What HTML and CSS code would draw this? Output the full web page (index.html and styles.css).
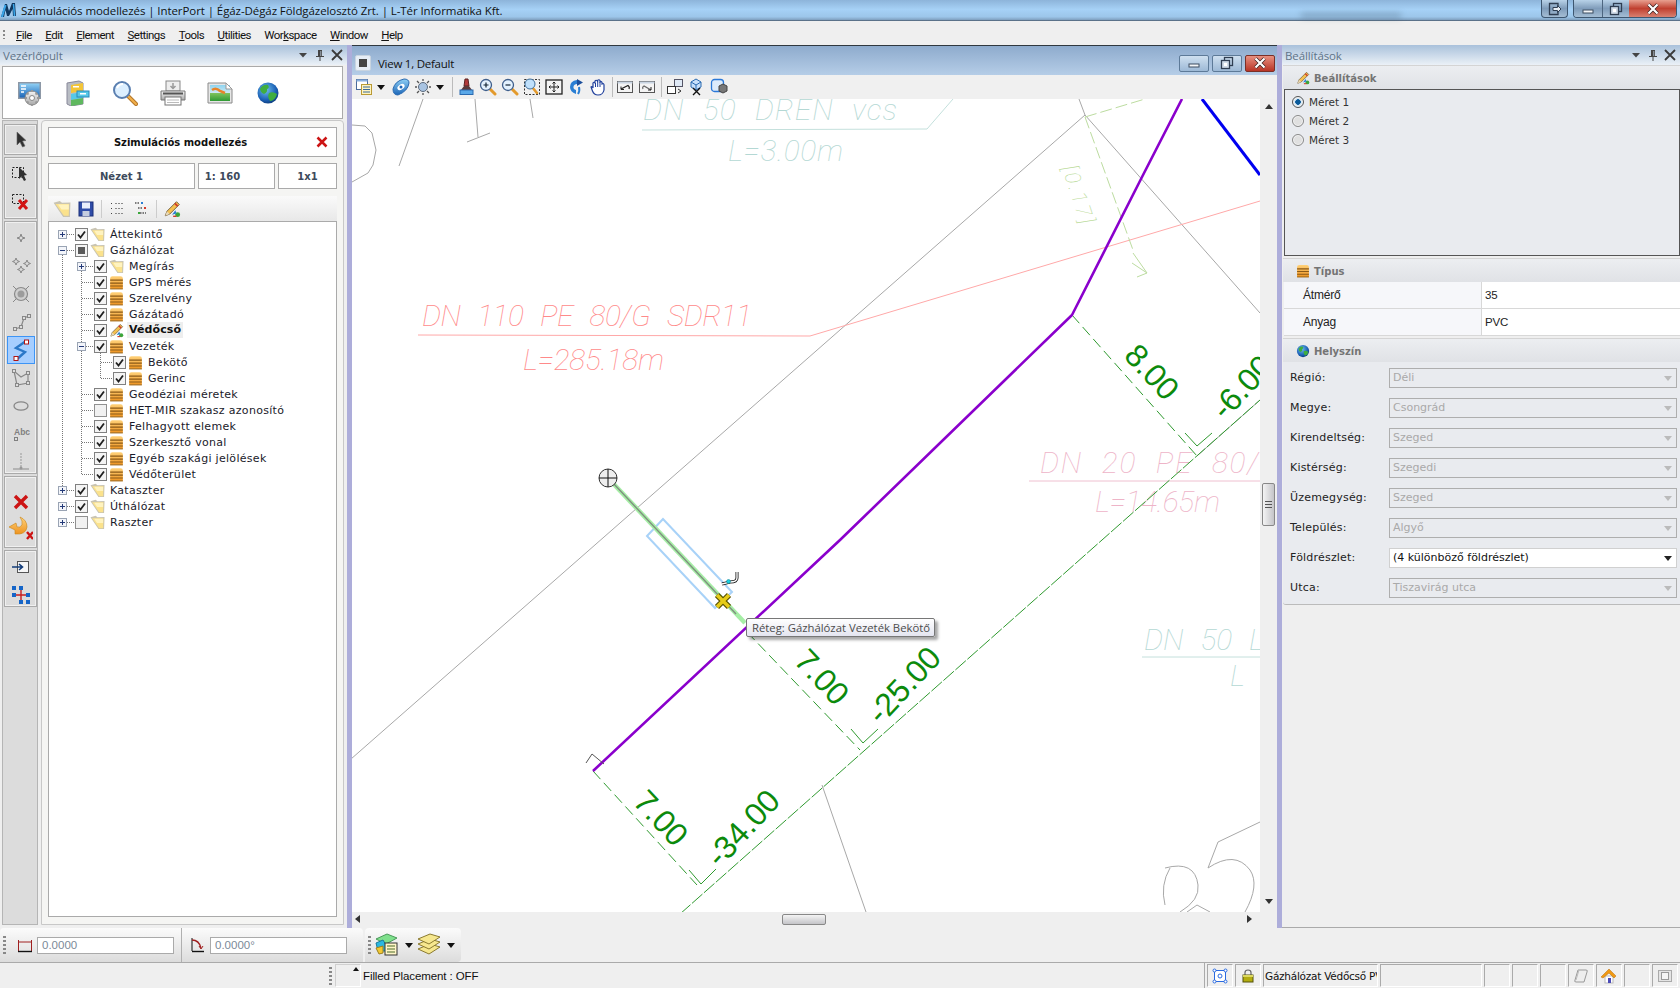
FILE: index.html
```html
<!DOCTYPE html>
<html lang="hu">
<head>
<meta charset="utf-8">
<title>Szimulációs modellezés</title>
<link rel="stylesheet" href="styles.css">
</head>
<body>
<svg class="defs" aria-hidden="true">
  <defs>
    <linearGradient id="gBlue" x1="0" y1="0" x2="0" y2="1"><stop offset="0" stop-color="#8fd0f5"/><stop offset="1" stop-color="#1c66b8"/></linearGradient>
    <linearGradient id="gOrange" x1="0" y1="0" x2="0" y2="1"><stop offset="0" stop-color="#ffd27a"/><stop offset="1" stop-color="#ee9320"/></linearGradient>
    <linearGradient id="gGrey" x1="0" y1="0" x2="0" y2="1"><stop offset="0" stop-color="#f6f6f6"/><stop offset="1" stop-color="#a8a8a8"/></linearGradient>
    <radialGradient id="gGlobe" cx=".4" cy=".35" r=".7"><stop offset="0" stop-color="#6fc0ef"/><stop offset=".7" stop-color="#1a5fb4"/><stop offset="1" stop-color="#0d3a78"/></radialGradient>
    <linearGradient id="gLand" x1="0" y1="0" x2="0" y2="1"><stop offset="0" stop-color="#8ed4f0"/><stop offset=".5" stop-color="#cfe9f4"/><stop offset=".51" stop-color="#7dc35c"/><stop offset="1" stop-color="#2f9a35"/></linearGradient>

    <symbol id="i-logo" viewBox="0 0 16 16"><path d="M0 15 L4 2 L6 2 L8 9 L11 1 L14 1 L15 14 L12 14 L11.500 7 L8 14 L6 14 L4.500 8 L3 15Z" fill="#10385f"/><path d="M1 15 L4.500 3" stroke="#3aa6ea" stroke-width="2" fill="none"/><path d="M12.500 2 L13.500 14" stroke="#3aa6ea" stroke-width="1.500" fill="none"/></symbol>

    <symbol id="i-folder" viewBox="0 0 16 16"><path d="M.5 2.500 L6 .8 L8 2.500 L15.500 2.200 L15 15 L9 15Z" fill="#c9c4b2"/><path d="M2.200 3.500 L14.300 3.500 L14 14 L9.700 14Z" fill="#fbe28c"/><path d="M4.500 4 L14 4 L14 8.500 L7.500 8.500Z" fill="#fff3bf"/></symbol>
    <symbol id="i-layer" viewBox="0 0 13 13"><path d="M1 3 Q1 1 3 1 H10 Q12 1 12 3 V12 H1Z" fill="url(#gOrange)"/><path d="M1 4.500 H12 M1 7 H12 M1 9.500 H12" stroke="#8a5a18" stroke-width="1"/><path d="M1 12 H12" stroke="#a36a18" stroke-width="1"/></symbol>
    <symbol id="i-pencil" viewBox="0 0 16 16"><path d="M12 1.500 L14.500 4 L6 12.500 L2 14 L3.500 10Z" fill="#f5c04e" stroke="#6c5a3a" stroke-width=".8"/><path d="M2 14 L3.500 10 L6 12.500Z" fill="#e9d9b8"/><path d="M10.500 3 L13 5.500" stroke="#d23a2a" stroke-width="1.600"/><circle cx="13" cy="13" r="2.200" fill="#3aa63a"/><path d="M8 13 L11 9 L12 12Z" fill="#2a7fd4"/><path d="M9 14.500 H12" stroke="#d23a2a" stroke-width="1.200"/></symbol>
    <symbol id="i-globe" viewBox="0 0 16 16"><circle cx="8" cy="8" r="7" fill="url(#gGlobe)"/><path d="M3 5 Q5 2 8 3 Q9 5 7 6 Q8 8 5 9 Q3 8 3 5Z M9 8 Q12 7 14 9 Q13 13 10 13 Q8 11 9 8Z" fill="#3fae3f"/></symbol>

    <symbol id="cb-on" viewBox="0 0 13 13"><rect x=".5" y=".5" width="12" height="12" fill="#f4f4f4" stroke="#808080"/><path d="M3 6.500 L5.500 9.500 L10 3.500" fill="none" stroke="#202020" stroke-width="1.800"/></symbol>
    <symbol id="cb-off" viewBox="0 0 13 13"><rect x=".5" y=".5" width="12" height="12" fill="#f1f1f1" stroke="#909090"/></symbol>
    <symbol id="cb-mix" viewBox="0 0 13 13"><rect x=".5" y=".5" width="12" height="12" fill="#f4f4f4" stroke="#808080"/><rect x="3" y="3" width="7" height="7" fill="#5a5a5a"/></symbol>
    <symbol id="ex-plus" viewBox="0 0 9 9"><rect x=".5" y=".5" width="8" height="8" fill="#f3f5fa" stroke="#9aa4b4"/><path d="M2 4.500 H7 M4.500 2 V7" stroke="#243a78"/></symbol>
    <symbol id="ex-minus" viewBox="0 0 9 9"><rect x=".5" y=".5" width="8" height="8" fill="#f3f5fa" stroke="#9aa4b4"/><path d="M2 4.500 H7" stroke="#243a78"/></symbol>

    <symbol id="t-arrow" viewBox="0 0 24 24"><path d="M8 4 L8 17 L11 14 L13.500 19 L16 18 L13.500 13 L17 12.500Z" fill="#303030" stroke="#666" stroke-width=".6"/></symbol>
    <symbol id="t-sel" viewBox="0 0 24 24"><rect x="3.500" y="6.500" width="11" height="10" fill="none" stroke="#222" stroke-dasharray="2 1.500"/><path d="M10 6 L10 18 L12.500 15.500 L15 20 L17 19 L15 14.500 L18 14Z" fill="#303030"/></symbol>
    <symbol id="t-selx" viewBox="0 0 24 24"><rect x="3.500" y="4.500" width="11" height="9" fill="none" stroke="#222" stroke-dasharray="2 1.500"/><path d="M10 10 L18 19 M18 10 L10 19" stroke="#d21414" stroke-width="3"/></symbol>
    <symbol id="t-pt" viewBox="0 0 24 24"><path d="M12 8 L13 11 L16 12 L13 13 L12 16 L11 13 L8 12 L11 11Z" fill="none" stroke="#888"/></symbol>
    <symbol id="t-pts" viewBox="0 0 24 24"><g fill="none" stroke="#888"><path d="M7 4 L8 6.500 L10.500 7.500 L8 8.500 L7 11 L6 8.500 L3.500 7.500 L6 6.500Z"/><path d="M18 6 L19 8.500 L21.500 9.500 L19 10.500 L18 13 L17 10.500 L14.500 9.500 L17 8.500Z"/><path d="M12 12 L13 14.500 L15.500 15.500 L13 16.500 L12 19 L11 16.500 L8.500 15.500 L11 14.500Z"/></g></symbol>
    <symbol id="t-circ" viewBox="0 0 24 24"><circle cx="12" cy="12" r="6.500" fill="#cfcfcf" stroke="#8a8a8a" stroke-width="1.200"/><circle cx="12" cy="12" r="3.500" fill="#9c9c9c"/><path d="M4 4 L7 7 M20 4 L17 7 M4 20 L7 17 M20 20 L17 17" stroke="#888"/></symbol>
    <symbol id="t-line" viewBox="0 0 24 24"><path d="M6 19 L12 17 L15 8 L20 6" fill="none" stroke="#888" stroke-width="1.200"/><g fill="#ddd" stroke="#888"><rect x="4.500" y="17.500" width="3" height="3"/><rect x="10.500" y="15.500" width="3" height="3"/><rect x="13.500" y="6.500" width="3" height="3"/><rect x="18.500" y="4.500" width="3" height="3"/></g></symbol>
    <symbol id="t-pipe" viewBox="0 0 24 24"><path d="M17 3 L7 10 L16 14 L7 22" fill="none" stroke="#2b78c8" stroke-width="2.400"/><rect x="15.500" y="2" width="4" height="4" fill="#fff" stroke="#b01414"/><rect x="5" y="18.500" width="4" height="4" fill="#fff" stroke="#b01414"/></symbol>
    <symbol id="t-poly" viewBox="0 0 24 24"><path d="M5 5 L8 19 L19 17 L19 7 L12 11Z" fill="none" stroke="#888" stroke-width="1.200"/><g fill="#ddd" stroke="#888"><rect x="3.500" y="3.500" width="3" height="3"/><rect x="6.500" y="17.500" width="3" height="3"/><rect x="17.500" y="15.500" width="3" height="3"/><rect x="17.500" y="5.500" width="3" height="3"/></g></symbol>
    <symbol id="t-ell" viewBox="0 0 24 24"><ellipse cx="12" cy="12" rx="7" ry="4.200" fill="none" stroke="#888" stroke-width="1.300"/></symbol>
    <symbol id="t-perp" viewBox="0 0 24 24"><path d="M12 3 V18" stroke="#999" stroke-dasharray="2 1"/><path d="M4 19 H20" stroke="#999" stroke-width="1.200"/><circle cx="12" cy="18" r="1.500" fill="#999"/></symbol>
    <symbol id="t-x" viewBox="0 0 24 24"><path d="M6 6 L18 18 M18 6 L6 18" stroke="#cc1414" stroke-width="3.400"/></symbol>
    <symbol id="t-undo" viewBox="0 0 24 24"><path d="M0 11 L6 14 L6 18 Q17 19 18 11 Q18 4 11 1 Q14 5 13 9 Q11 12 8 11 L7 7Z" fill="url(#gOrange)" stroke="#c98414" stroke-width=".6"/><path d="M18 16 L24 23 M24 16 L18 23" stroke="#cc1414" stroke-width="2.400"/></symbol>
    <symbol id="t-enter" viewBox="0 0 24 24"><rect x="8.500" y="6.500" width="11" height="11" fill="#f6f6f6" stroke="#555"/><path d="M3 12 H13 M10 9 L13.500 12 L10 15" fill="none" stroke="#123c7a" stroke-width="1.600"/></symbol>
    <symbol id="t-net" viewBox="0 0 24 24"><path d="M12 5 V20 M5 12 H20" stroke="#c81e1e" stroke-width="1.400"/><g fill="#1565c8"><rect x="3" y="3" width="4" height="4"/><rect x="10" y="3" width="4" height="4"/><rect x="3" y="10" width="4" height="4"/><rect x="17" y="10" width="4" height="4"/><rect x="10" y="17" width="4" height="4"/><rect x="17" y="17" width="4" height="4"/></g></symbol>

    <symbol id="d-monitor" viewBox="0 0 26 26"><rect x="1" y="2" width="23" height="17" fill="#8d98a6"/><rect x="2.500" y="3.500" width="20" height="14" fill="url(#gBlue)"/><path d="M4 6 H9 M4 9 H9 M4 12 H7" stroke="#fff" stroke-width="1.400"/><circle cx="15" cy="18" r="7" fill="url(#gGrey)" stroke="#888"/><circle cx="15" cy="18" r="2.500" fill="#fff" stroke="#888"/><path d="M15 10 V12 M15 24 V26 M8 18 H10 M20 18 H23 M10 13 L11.500 14.500 M20 13 L18.500 14.500 M10 23 L11.500 21.500 M20 23 L18.500 21.500" stroke="#999" stroke-width="1.800"/></symbol>
    <symbol id="d-cabinet" viewBox="0 0 26 26"><path d="M2 3 L14 1 L18 3 V24 L6 26 L2 24Z" fill="#b9bdc4" stroke="#889"/><path d="M6 5 L18 3 V11 L6 13Z" fill="#f4c537"/><path d="M6 14 L18 12 V18 L6 20Z" fill="#56c8e8"/><path d="M6 20 L18 18 V24 L6 26Z" fill="#5fb85f"/><rect x="12" y="11" width="12" height="6" fill="#56c8e8" stroke="#2b88b8"/><rect x="8" y="6" width="6" height="1.500" fill="#fff"/><rect x="15" y="13" width="6" height="1.500" fill="#fff"/></symbol>
    <symbol id="d-search" viewBox="0 0 26 26"><path d="M15 15 L24 24" stroke="#b4762a" stroke-width="4" stroke-linecap="round"/><path d="M15 15 L24 24" stroke="#f2b04a" stroke-width="2" stroke-linecap="round"/><circle cx="10" cy="10" r="8" fill="#dcefff" stroke="#5a7fb0" stroke-width="2"/><path d="M5 8 Q7 4 11 4" stroke="#fff" stroke-width="2" fill="none"/></symbol>
    <symbol id="d-print" viewBox="0 0 26 26"><rect x="6" y="1" width="14" height="10" fill="#eee" stroke="#888"/><path d="M13 3 V8 M10.500 6 L13 8.500 L15.500 6" stroke="#999" fill="none" stroke-width="1.500"/><path d="M1 11 H25 V20 H1Z" fill="url(#gGrey)" stroke="#777"/><rect x="5" y="17" width="16" height="8" fill="#fff" stroke="#777"/><path d="M7 20 H19 M7 22.500 H19" stroke="#bbb"/><rect x="3" y="12.500" width="20" height="2" fill="#555"/></symbol>
    <symbol id="d-image" viewBox="0 0 26 26"><path d="M1 3 H19 L25 9 V23 H1Z" fill="#e6e6e6" stroke="#8a8a8a"/><rect x="3" y="5" width="20" height="16" fill="url(#gLand)"/><path d="M19 3 V9 H25Z" fill="#fff" stroke="#999"/><path d="M5 10 Q9 7 13 11 L18 13" stroke="#e8842a" stroke-width="2.500" fill="none"/></symbol>
    <symbol id="d-globe" viewBox="0 0 26 26"><circle cx="13" cy="13" r="10.500" fill="url(#gGlobe)"/><path d="M5 9 Q8 4 13 5 Q15 8 12 9 Q13 12 9 14 Q6 13 5 9Z M14 13 Q18 11 22 14 Q20 21 15 21 Q12 17 14 13Z" fill="#3fae3f"/></symbol>

    <symbol id="m-open" viewBox="0 0 18 18"><use href="#i-folder" width="18" height="18"/></symbol>
    <symbol id="m-save" viewBox="0 0 18 18"><rect x="2" y="2" width="14" height="14" fill="#2f4ca8" stroke="#1b2f78"/><rect x="5" y="2.500" width="8" height="6" fill="#e9eefb"/><rect x="5.500" y="11" width="7" height="5" fill="#c5cde0"/></symbol>
    <symbol id="m-list" viewBox="0 0 18 18"><path d="M3 3.500 H5 M3 8.500 H5 M3 13.500 H5" stroke="#444" stroke-dasharray="1 1"/><path d="M7 3.500 H15 M7 8.500 H15 M7 13.500 H15" stroke="#8a8a8a" stroke-dasharray="2 1"/></symbol>
    <symbol id="m-tree" viewBox="0 0 18 18"><path d="M3 3 H8 M6 8 H11 M8 13 H14" stroke="#555" stroke-dasharray="1.500 1" stroke-width="1.300"/><rect x="9" y="2" width="2" height="2" fill="#2a7fd4"/><rect x="12" y="7" width="2" height="2" fill="#d23a2a"/><rect x="6" y="12" width="2" height="2" fill="#3aa63a"/></symbol>

    <symbol id="v-win" viewBox="0 0 18 18"><rect x="1.500" y="1.500" width="11" height="10" fill="#fff" stroke="#4a6a9a"/><rect x="1.500" y="1.500" width="11" height="2" fill="#8ab0de"/><rect x="6.500" y="6.500" width="10" height="10" fill="#fff4c0" stroke="#b99a35"/><path d="M8 9 H15 M8 11.500 H15 M8 14 H15" stroke="#3a6a9a"/></symbol>
    <symbol id="v-eye" viewBox="0 0 18 18"><path d="M1 11 Q3 3 12 1 Q17 1 17 5 Q16 13 6 17 Q1 17 1 11Z" fill="url(#gBlue)" stroke="#2a6ab0"/><ellipse cx="9" cy="9" rx="4" ry="2.500" fill="#fff" transform="rotate(-35 9 9)"/><circle cx="9" cy="9" r="1.500" fill="#1c66b8"/></symbol>
    <symbol id="v-sun" viewBox="0 0 18 18"><circle cx="9" cy="9" r="4.500" fill="#a9c4e2" stroke="#5c6a7c"/><path d="M9 1 V3 M9 15 V17 M1 9 H3 M15 9 H17 M3 3 L5 5 M15 3 L13 5 M3 15 L5 13 M15 15 L13 13" stroke="#555" stroke-width="1.300"/></symbol>
    <symbol id="v-brush" viewBox="0 0 18 18"><path d="M8 1 H11 L12 8 H7Z" fill="#b03a3a" stroke="#5a2222"/><path d="M7 8 H12 L15 12 H4Z" fill="#5a3a3a"/><rect x="3" y="12" width="13" height="4.500" fill="#5aa8e8" stroke="#2a6ab0"/></symbol>
    <symbol id="v-zin" viewBox="0 0 18 18"><path d="M10 10 L16 16" stroke="#e39a2c" stroke-width="3" stroke-linecap="round"/><circle cx="7" cy="7" r="5.500" fill="#e3f2ff" stroke="#3f5f8c" stroke-width="1.300"/><path d="M4.500 7 H9.500 M7 4.500 V9.500" stroke="#123" stroke-width="1.200"/></symbol>
    <symbol id="v-zout" viewBox="0 0 18 18"><path d="M10 10 L16 16" stroke="#e39a2c" stroke-width="3" stroke-linecap="round"/><circle cx="7" cy="7" r="5.500" fill="#e3f2ff" stroke="#3f5f8c" stroke-width="1.300"/><path d="M4.500 7 H9.500" stroke="#123" stroke-width="1.200"/></symbol>
    <symbol id="v-zwin" viewBox="0 0 18 18"><rect x="1.500" y="1.500" width="15" height="15" fill="none" stroke="#333" stroke-dasharray="2 1.500"/><path d="M9 9 L14 15" stroke="#e39a2c" stroke-width="2.600" stroke-linecap="round"/><circle cx="7" cy="6" r="5" fill="#bfe0fb" stroke="#3f6f9c"/></symbol>
    <symbol id="v-fit" viewBox="0 0 18 18"><rect x="1" y="2" width="16" height="14" fill="#f4f4f4" stroke="#222" stroke-width="1.300"/><path d="M9 4 V14 M4 9 H14" stroke="#222"/><path d="M7.500 5.500 L9 4 L10.500 5.500 M7.500 12.500 L9 14 L10.500 12.500 M5.500 7.500 L4 9 L5.500 10.500 M12.500 7.500 L14 9 L12.500 10.500" stroke="#222" fill="none"/></symbol>
    <symbol id="v-rot" viewBox="0 0 18 18"><path d="M10 2 Q3 3 3 9 Q3 14 9 16 L9 12 Q6 11 6.500 8.500 Q7 6 10 6Z" fill="#2a7fd4"/><path d="M10 1 L16 4.500 L10 8Z" fill="#1c4f9c"/><path d="M12 9 Q13 13 11 16" stroke="#2a7fd4" stroke-width="2" fill="none"/></symbol>
    <symbol id="v-hand" viewBox="0 0 18 18"><path d="M4 10 V5 Q5 3.500 6 5 V3 Q7 1.500 8.500 3 V2.500 Q10 1 11 2.500 V4 Q12.500 3 13 4.500 V6 Q15 5 15 7 V12 Q14 17 9 17 Q5 17 3.500 13 L2 9 Q3 8 4 10Z" fill="#fff" stroke="#1f3f9c" stroke-width="1.200"/><path d="M6.500 5 V9 M8.700 3 V9 M11 4 V9" stroke="#1f3f9c"/></symbol>
    <symbol id="v-undo" viewBox="0 0 18 18"><rect x="1.500" y="3.500" width="15" height="11" fill="#f4f4f4" stroke="#555"/><rect x="1.500" y="3.500" width="15" height="2" fill="#c8d4e2"/><path d="M5 11 L12 7.500 Q14 9 13 11" fill="none" stroke="#222" stroke-width="1.200"/><path d="M5 8.500 V11.500 H8" fill="none" stroke="#222"/></symbol>
    <symbol id="v-redo" viewBox="0 0 18 18"><rect x="1.500" y="3.500" width="15" height="11" fill="#f4f4f4" stroke="#555"/><rect x="1.500" y="3.500" width="15" height="2" fill="#c8d4e2"/><path d="M13 12 L6 8 Q4 9 5 11" fill="none" stroke="#666" stroke-width="1.200"/><path d="M13 9 V12 H10" fill="none" stroke="#222"/></symbol>
    <symbol id="v-copy" viewBox="0 0 18 18"><rect x="8.500" y="1.500" width="8" height="7" fill="#dfe9f5" stroke="#556"/><rect x="1.500" y="8.500" width="8" height="7" fill="#fff" stroke="#333"/><path d="M12 11 L15 13 L12 15" stroke="#333" fill="none"/></symbol>
    <symbol id="v-cube" viewBox="0 0 18 18"><path d="M3 4 L8 1 L13 4 V9 L8 12 L3 9Z" fill="#c8e0fb" stroke="#2a6ab0"/><path d="M3 4 L8 7 L13 4 M8 7 V12" stroke="#2a6ab0" fill="none"/><path d="M5 10 L12 17 M12 10 L5 17" stroke="#111" stroke-width="1.400"/></symbol>
    <symbol id="v-views" viewBox="0 0 18 18"><rect x="1.500" y="1.500" width="12" height="12" rx="3" fill="#dcebfb" stroke="#2a78d8" stroke-width="1.300"/><path d="M9 8 L13 6 L17 8 V13 L13 15 L9 13Z" fill="#777" stroke="#444"/></symbol>

    <symbol id="w-min" viewBox="0 0 14 14"><rect x="2" y="8" width="10" height="3" fill="#f4f6f8" stroke="#3d4c60"/></symbol>
    <symbol id="w-res" viewBox="0 0 14 14"><rect x="4.500" y="1.500" width="8" height="8" fill="none" stroke="#2f3e52" stroke-width="1.300"/><rect x="1.500" y="4.500" width="8" height="8" fill="#cfdbe8" stroke="#2f3e52" stroke-width="1.300"/><rect x="4" y="7" width="3" height="3" fill="#fff"/></symbol>
    <symbol id="w-x" viewBox="0 0 14 14"><path d="M2.500 2.500 L11.500 11.500 M11.500 2.500 L2.500 11.500" stroke="#3a2222" stroke-width="3.600"/><path d="M2.500 2.500 L11.500 11.500 M11.500 2.500 L2.500 11.500" stroke="#fff" stroke-width="2.200"/></symbol>
    <symbol id="w-exit" viewBox="0 0 14 14"><path d="M10 4 V1.500 H1.500 V12.500 H10 V10" fill="none" stroke="#2f3e52" stroke-width="1.300"/><path d="M5 5.500 H9.500 V3.500 L13 7 L9.500 10.500 V8.500 H5Z" fill="#e8eef4" stroke="#2f3e52"/></symbol>
    <symbol id="h-menu" viewBox="0 0 10 10"><path d="M1 3 H9 L5 7.500Z" fill="#444"/></symbol>
    <symbol id="h-pin" viewBox="0 0 10 12"><path d="M3 1 H7 V7 H9 V8 H5.500 V12 H4.500 V8 H1 V7 H3Z M5.500 2 V7 H6.200 V2Z" fill="#444" fill-rule="evenodd"/></symbol>
    <symbol id="h-x" viewBox="0 0 12 12"><path d="M1 1 L11 11 M11 1 L1 11" stroke="#3a3a3a" stroke-width="1.800"/></symbol>

    <symbol id="b-len" viewBox="0 0 16 16"><path d="M1.500 3 V14 M14.500 3 V14" stroke="#a02020"/><path d="M2 5 H14" stroke="#a02020"/><path d="M1 14.500 H15" stroke="#111" stroke-width="1.400"/></symbol>
    <symbol id="b-ang" viewBox="0 0 16 16"><path d="M3 1 V14" stroke="#111"/><path d="M3 14.500 H15" stroke="#111" stroke-width="1.400"/><path d="M3 3 Q10 3 12 11" fill="none" stroke="#a02020" stroke-width="1.300"/><path d="M10 9 L12 12 L14 9" fill="none" stroke="#a02020"/></symbol>
    <symbol id="b-levels" viewBox="0 0 24 24"><path d="M1 6 L12 1 L22 5 L11 11Z" fill="#7fe08c" stroke="#4a9a5a"/><path d="M1 10 L8 7 L11 12 V18 L3 18Z" fill="#2bb8e0" stroke="#1a7a9c"/><path d="M1 15 L8 13 V20 L4 21Z" fill="#f2c832" stroke="#9a8020"/><rect x="10" y="10" width="12" height="12" fill="#fff6c8" stroke="#333"/><path d="M12 13 H20 M12 16 H20 M12 19 H20" stroke="#4a6a2a"/></symbol>
    <symbol id="b-stack" viewBox="0 0 24 24"><g stroke="#8a7a30" fill="#f6e78e"><path d="M1 16 L13 11 L23 14 L12 21Z"/><path d="M1 11 L13 6 L23 9 L12 16Z"/><path d="M1 6 L13 1 L23 4 L12 11Z"/></g></symbol>

    <symbol id="s-fit" viewBox="0 0 16 16"><rect x="2.500" y="2.500" width="11" height="11" fill="#fff" stroke="#2a6ae0"/><circle cx="8" cy="8" r="2" fill="none" stroke="#2a6ae0"/><g fill="#fff" stroke="#2a6ae0"><circle cx="2.500" cy="2.500" r="1.500"/><circle cx="13.500" cy="2.500" r="1.500"/><circle cx="2.500" cy="13.500" r="1.500"/><circle cx="13.500" cy="13.500" r="1.500"/></g></symbol>
    <symbol id="s-lock" viewBox="0 0 16 16"><path d="M5 7 V4.500 Q5 2 8 2 Q11 2 11 4.500 V7" fill="none" stroke="#666" stroke-width="1.200"/><rect x="3" y="7" width="10" height="7" fill="#b3ad10" stroke="#55520a"/><rect x="3" y="7" width="10" height="2" fill="#dcd860"/></symbol>
    <symbol id="s-scroll" viewBox="0 0 16 16"><path d="M5 2 H13 Q15 2 14 4 L11 14 H3 Q1 14 2 12Z" fill="#eee" stroke="#999"/><path d="M6 2 L3 12" stroke="#bbb"/></symbol>
    <symbol id="s-home" viewBox="0 0 16 16"><rect x="4" y="8" width="8" height="7" fill="#fff" stroke="#bbb"/><rect x="7" y="10" width="3" height="5" fill="#4a4ab8"/><path d="M0 9 L8 1 L15 8 L13 10 L8 5 L2 10Z" fill="#f09a14" stroke="#b96a0a" stroke-width=".5"/></symbol>
    <symbol id="s-view" viewBox="0 0 16 16"><rect x="1.500" y="2.500" width="13" height="11" fill="#e4e4e4" stroke="#aaa"/><rect x="4.500" y="4.500" width="7" height="7" fill="#f4f4f4" stroke="#999"/></symbol>
  </defs>
</svg>

<header class="titlebar">
  <svg class="tb-logo"><use href="#i-logo"/></svg>
  <span class="tb-title">Szimulációs modellezés | InterPort | Égáz-Dégáz Földgázelosztó Zrt. | L-Tér Informatika Kft.</span>
  <span class="tb-smudge"></span>
  <div class="tb-buttons">
    <span class="wbtn exit"><svg class="w14"><use href="#w-exit"/></svg></span>
    <div class="wgroup">
      <span class="wbtn min"><svg class="w14"><use href="#w-min"/></svg></span>
      <span class="wbtn res"><svg class="w14"><use href="#w-res"/></svg></span>
      <span class="wbtn close"><svg class="w14"><use href="#w-x"/></svg></span>
    </div>
  </div>
</header>

<nav class="menubar">
  <span class="grip"></span>
  <span class="mi"><u>F</u>ile</span>
  <span class="mi"><u>E</u>dit</span>
  <span class="mi"><u>E</u>lement</span>
  <span class="mi"><u>S</u>ettings</span>
  <span class="mi"><u>T</u>ools</span>
  <span class="mi"><u>U</u>tilities</span>
  <span class="mi">Wor<u>k</u>space</span>
  <span class="mi"><u>W</u>indow</span>
  <span class="mi"><u>H</u>elp</span>
</nav>

<main class="workspace">
  <aside class="left">
    <div class="dock-head">
      <span class="dock-title">Vezérlőpult</span>
      <svg class="h-ic h-m"><use href="#h-menu"/></svg>
      <svg class="h-ic h-p"><use href="#h-pin"/></svg>
      <svg class="h-ic h-c"><use href="#h-x"/></svg>
    </div>
    <div class="dash">
      <svg class="d-ic"><use href="#d-monitor"/></svg>
      <svg class="d-ic"><use href="#d-cabinet"/></svg>
      <svg class="d-ic"><use href="#d-search"/></svg>
      <svg class="d-ic"><use href="#d-print"/></svg>
      <svg class="d-ic"><use href="#d-image"/></svg>
      <svg class="d-ic"><use href="#d-globe"/></svg>
    </div>
    <div class="left-body">
      <div class="tools">
        <div class="tg g1"><span class="tbtn b30"><svg class="t24"><use href="#t-arrow"/></svg></span></div>
        <div class="tg g2">
          <span class="tbtn b29"><svg class="t24"><use href="#t-sel"/></svg></span>
          <span class="tbtn b29"><svg class="t24"><use href="#t-selx"/></svg></span>
        </div>
        <div class="tg g3">
          <span class="tbtn b28"><svg class="t24"><use href="#t-pt"/></svg></span>
          <span class="tbtn b28"><svg class="t24"><use href="#t-pts"/></svg></span>
          <span class="tbtn b28"><svg class="t24"><use href="#t-circ"/></svg></span>
          <span class="tbtn b28"><svg class="t24"><use href="#t-line"/></svg></span>
          <span class="tbtn b28 sel"><svg class="t24"><use href="#t-pipe"/></svg></span>
          <span class="tbtn b28"><svg class="t24"><use href="#t-poly"/></svg></span>
          <span class="tbtn b28"><svg class="t24"><use href="#t-ell"/></svg></span>
          <span class="tbtn b28 abc"><span class="abc-box"></span>Abc</span>
          <span class="tbtn b28"><svg class="t24"><use href="#t-perp"/></svg></span>
        </div>
        <div class="tg g4">
          <span class="tbtn b26"><svg class="t24"><use href="#t-x"/></svg></span>
          <span class="tbtn b26"><svg class="t24"><use href="#t-undo"/></svg></span>
        </div>
        <div class="tg g5">
          <span class="tbtn b28"><svg class="t24"><use href="#t-enter"/></svg></span>
          <span class="tbtn b28"><svg class="t24"><use href="#t-net"/></svg></span>
        </div>
      </div>
      <div class="panel">
        <div class="box head-box"><span class="head-text">Szimulációs modellezés</span><svg class="head-x"><use href="#t-x"/></svg></div>
        <div class="chips">
          <div class="box chip c1">Nézet 1</div>
          <div class="box chip c2">1: 160</div>
          <div class="box chip c3">1x1</div>
        </div>
        <div class="mini">
          <svg class="m18"><use href="#m-open"/></svg>
          <svg class="m18"><use href="#m-save"/></svg>
          <span class="mini-sep"></span>
          <svg class="m18"><use href="#m-list"/></svg>
          <svg class="m18"><use href="#m-tree"/></svg>
          <span class="mini-sep"></span>
          <svg class="m18"><use href="#i-pencil"/></svg>
        </div>
        <div class="tree">
          <span class="guide ga"></span><span class="guide gb"></span><span class="guide gc"></span>
          <div class="row l0"><span class="slot"><svg class="ex"><use href="#ex-plus"/></svg></span><svg class="cb"><use href="#cb-on"/></svg><svg class="ti"><use href="#i-folder"/></svg><span class="tx">Áttekintő</span></div>
          <div class="row l0"><span class="slot"><svg class="ex"><use href="#ex-minus"/></svg></span><svg class="cb"><use href="#cb-mix"/></svg><svg class="ti"><use href="#i-folder"/></svg><span class="tx">Gázhálózat</span></div>
          <div class="row l1"><span class="slot"><svg class="ex"><use href="#ex-plus"/></svg></span><svg class="cb"><use href="#cb-on"/></svg><svg class="ti"><use href="#i-folder"/></svg><span class="tx">Megírás</span></div>
          <div class="row l1"><span class="slot leaf"></span><svg class="cb"><use href="#cb-on"/></svg><svg class="ti"><use href="#i-layer"/></svg><span class="tx">GPS mérés</span></div>
          <div class="row l1"><span class="slot leaf"></span><svg class="cb"><use href="#cb-on"/></svg><svg class="ti"><use href="#i-layer"/></svg><span class="tx">Szerelvény</span></div>
          <div class="row l1"><span class="slot leaf"></span><svg class="cb"><use href="#cb-on"/></svg><svg class="ti"><use href="#i-layer"/></svg><span class="tx">Gázátadó</span></div>
          <div class="row l1"><span class="slot leaf"></span><svg class="cb"><use href="#cb-on"/></svg><svg class="ti"><use href="#i-pencil"/></svg><span class="tx active">Védőcső</span></div>
          <div class="row l1"><span class="slot"><svg class="ex"><use href="#ex-minus"/></svg></span><svg class="cb"><use href="#cb-on"/></svg><svg class="ti"><use href="#i-layer"/></svg><span class="tx">Vezeték</span></div>
          <div class="row l2"><span class="slot leaf"></span><svg class="cb"><use href="#cb-on"/></svg><svg class="ti"><use href="#i-layer"/></svg><span class="tx">Bekötő</span></div>
          <div class="row l2"><span class="slot leaf"></span><svg class="cb"><use href="#cb-on"/></svg><svg class="ti"><use href="#i-layer"/></svg><span class="tx">Gerinc</span></div>
          <div class="row l1"><span class="slot leaf"></span><svg class="cb"><use href="#cb-on"/></svg><svg class="ti"><use href="#i-layer"/></svg><span class="tx">Geodéziai méretek</span></div>
          <div class="row l1"><span class="slot leaf"></span><svg class="cb"><use href="#cb-off"/></svg><svg class="ti"><use href="#i-layer"/></svg><span class="tx">HET-MIR szakasz azonosító</span></div>
          <div class="row l1"><span class="slot leaf"></span><svg class="cb"><use href="#cb-on"/></svg><svg class="ti"><use href="#i-layer"/></svg><span class="tx">Felhagyott elemek</span></div>
          <div class="row l1"><span class="slot leaf"></span><svg class="cb"><use href="#cb-on"/></svg><svg class="ti"><use href="#i-layer"/></svg><span class="tx">Szerkesztő vonal</span></div>
          <div class="row l1"><span class="slot leaf"></span><svg class="cb"><use href="#cb-on"/></svg><svg class="ti"><use href="#i-layer"/></svg><span class="tx">Egyéb szakági jelölések</span></div>
          <div class="row l1"><span class="slot leaf"></span><svg class="cb"><use href="#cb-on"/></svg><svg class="ti"><use href="#i-layer"/></svg><span class="tx">Védőterület</span></div>
          <div class="row l0"><span class="slot"><svg class="ex"><use href="#ex-plus"/></svg></span><svg class="cb"><use href="#cb-on"/></svg><svg class="ti"><use href="#i-folder"/></svg><span class="tx">Kataszter</span></div>
          <div class="row l0"><span class="slot"><svg class="ex"><use href="#ex-plus"/></svg></span><svg class="cb"><use href="#cb-on"/></svg><svg class="ti"><use href="#i-folder"/></svg><span class="tx">Úthálózat</span></div>
          <div class="row l0"><span class="slot"><svg class="ex"><use href="#ex-plus"/></svg></span><svg class="cb"><use href="#cb-off"/></svg><svg class="ti"><use href="#i-folder"/></svg><span class="tx">Raszter</span></div>
        </div>
      </div>
    </div>
  </aside>

  <div class="strip"></div>

  <section class="view">
    <div class="view-title">
      <span class="view-icon"><span></span></span>
      <span class="view-name">View 1, Default</span>
      <div class="view-btns">
        <span class="vb"><svg class="w14"><use href="#w-min"/></svg></span>
        <span class="vb"><svg class="w14"><use href="#w-res"/></svg></span>
        <span class="vb red"><svg class="w14"><use href="#w-x"/></svg></span>
      </div>
    </div>
    <div class="view-tools">
      <svg class="v18"><use href="#v-win"/></svg><span class="caret"></span>
      <svg class="v18"><use href="#v-eye"/></svg>
      <svg class="v18"><use href="#v-sun"/></svg><span class="caret"></span>
      <span class="vsep"></span>
      <svg class="v18"><use href="#v-brush"/></svg>
      <svg class="v18"><use href="#v-zin"/></svg>
      <svg class="v18"><use href="#v-zout"/></svg>
      <svg class="v18"><use href="#v-zwin"/></svg>
      <svg class="v18"><use href="#v-fit"/></svg>
      <svg class="v18"><use href="#v-rot"/></svg>
      <svg class="v18"><use href="#v-hand"/></svg>
      <span class="vsep"></span>
      <svg class="v18"><use href="#v-undo"/></svg>
      <svg class="v18"><use href="#v-redo"/></svg>
      <span class="vsep"></span>
      <svg class="v18"><use href="#v-copy"/></svg>
      <svg class="v18"><use href="#v-cube"/></svg>
      <svg class="v18"><use href="#v-views"/></svg>
    </div>
    <div class="view-mid">
      <div class="canvas">
        <svg class="drawing" viewBox="352 99 908 813">
          <g class="ln-grey">
            <path d="M1085 115 L351 759"/>
            <path d="M1079 99 L1085 115 L1260 313"/>
            <path d="M352 125 L365 126 L372 133 L376 150 L373 165 L368 173 L352 182"/>
            <path d="M423 99 L399 166"/>
            <path d="M475 99 L478 137 M467 142 L490 133"/>
            <path d="M530 99 L533 118"/>
            <path d="M822 785 L866 912"/>
            <path d="M1165 868 Q1195 860 1198 885 Q1200 900 1180 912 M1165 905 Q1160 885 1170 868"/>
            <path d="M1260 822 L1218 842 L1208 868 Q1235 850 1250 870 Q1260 885 1245 912"/>
            <path d="M1197 456 L1260 400"/>
            <path d="M1187 912 L1197 905 L1210 912"/>
          </g>
          <g class="ln-pink">
            <path d="M1260 201 L810 336 L418 335"/>
          </g>
          <path class="ln-teal" d="M642 130 L927 129 L953 99"/>
          <path class="ln-rose" d="M1029 481 H1260"/>
          <path class="ln-teal" d="M1142 657 H1260"/>
          <g class="ln-lime">
            <path class="dash-l" d="M1085 117 L1145 99"/>
            <path class="dash-l" d="M1085 117 L1133 250"/>
            <path d="M1133 253 L1147 273 L1132 263 M1137 277 L1147 273"/>
          </g>
          <text class="cad cad-red" x="422" y="326" textLength="330">DN 110 PE 80/G SDR11</text>
          <text class="cad cad-red" x="523" y="370" textLength="141">L=285.18m</text>
          <text class="cad cad-teal" x="643" y="120" textLength="254">DN 50 DRÉN vcs</text>
          <text class="cad cad-teal" x="728" y="161" textLength="115">L=3.00m</text>
          <text class="cad cad-rose" x="1040" y="473" textLength="240">DN 20 PE 80/G</text>
          <text class="cad cad-rose" x="1095" y="512" textLength="125">L=14.65m</text>
          <text class="cad cad-teal" x="1144" y="650" textLength="120">DN 50 L</text>
          <text class="cad cad-teal" x="1230" y="686" textLength="60">L=</text>
          <text class="cad cad-lime" transform="translate(1062 168) rotate(72)" textLength="60">[0.17]</text>

          <g class="ln-green">
            <path class="dash-m" d="M1072 315 L1197 456"/>
            <path class="dash-m" d="M747 632 L860 750"/>
            <path class="dash-m" d="M593 771 L697 885"/>
            <path class="dash-s" d="M680 914 L1102 540 L1260 400"/>
            <path d="M1185 433 L1197 446 L1212 433"/>
            <path d="M851 729 L863 743 L878 729"/>
            <path d="M689 870 L701 884 L716 869"/>
          </g>
          <path class="ln-blue" d="M1202 99 L1260 175"/>
          <path class="ln-purple" d="M1182 99 L1142 177 L1072 315 L840 540 L593 771"/>
          <path class="tick" d="M586 763 L592 754 L604 764"/>

          <text class="dim" transform="translate(1152 372) rotate(47)">8.00</text>
          <text class="dim" transform="translate(1242 387) rotate(-47)">-6.00</text>
          <text class="dim" transform="translate(822 677) rotate(47)">7.00</text>
          <text class="dim" transform="translate(904 685) rotate(-47)">-25.00</text>
          <text class="dim" transform="translate(661 818) rotate(47)">7.00</text>
          <text class="dim" transform="translate(743 828) rotate(-47)">-34.00</text>

          <path class="sel-rect" d="M663 519 L647 536 L715 608 L732 592Z"/>
          <path class="sel-glow" d="M608 478 L745 623"/>
          <path class="sel-core" d="M613 483 L736 614"/>
          <circle class="sel-circ" cx="608" cy="478" r="9"/>
          <path class="sel-cross" d="M599 478 H617 M608 469 V487"/>
          <path class="x-out" d="M717 595 L729 607 M729 595 L717 607"/>
          <path class="x-in" d="M717 595 L729 607 M729 595 L717 607"/>
          <path class="cur-out" d="M737 572 V578 Q737 582 730 582 L722 584"/>
          <path class="cur-in" d="M737 572 V578 Q737 582 730 582 L722 584"/>
          <circle class="cur-dot" cx="728.500" cy="581.500" r="2"/>
        </svg>
        <div class="tooltip">Réteg: Gázhálózat Vezeték Bekötő</div>
      </div>
      <div class="vscroll">
        <span class="arr up"></span>
        <span class="vthumb"><span></span></span>
        <span class="arr down"></span>
      </div>
    </div>
    <div class="hscroll">
      <span class="arr lf"></span>
      <span class="hthumb"></span>
      <span class="arr rt"></span>
    </div>
  </section>

  <div class="strip"></div>

  <aside class="right">
    <div class="dock-head">
      <span class="dock-title">Beállítások</span>
      <svg class="h-ic h-m"><use href="#h-menu"/></svg>
      <svg class="h-ic h-p"><use href="#h-pin"/></svg>
      <svg class="h-ic h-c"><use href="#h-x"/></svg>
    </div>
    <div class="gh"><svg class="gh-ic"><use href="#i-pencil"/></svg>Beállítások</div>
    <div class="listbox">
      <div class="radio-row"><span class="radio on"></span>Méret 1</div>
      <div class="radio-row"><span class="radio"></span>Méret 2</div>
      <div class="radio-row"><span class="radio"></span>Méret 3</div>
    </div>
    <div class="gh gap"><svg class="gh-ic"><use href="#i-layer"/></svg>Típus</div>
    <div class="prop"><span class="pk">Átmérő</span><span class="pv">35</span></div>
    <div class="prop"><span class="pk">Anyag</span><span class="pv">PVC</span></div>
    <div class="gh gap"><svg class="gh-ic"><use href="#i-globe"/></svg>Helyszín</div>
    <div class="form">
      <div class="frow"><label>Régió:</label><div class="combo off">Déli</div></div>
      <div class="frow"><label>Megye:</label><div class="combo off">Csongrád</div></div>
      <div class="frow"><label>Kirendeltség:</label><div class="combo off">Szeged</div></div>
      <div class="frow"><label>Kistérség:</label><div class="combo off">Szegedi</div></div>
      <div class="frow"><label>Üzemegység:</label><div class="combo off">Szeged</div></div>
      <div class="frow"><label>Település:</label><div class="combo off">Algyő</div></div>
      <div class="frow"><label>Földrészlet:</label><div class="combo">(4 különböző földrészlet)</div></div>
      <div class="frow"><label>Utca:</label><div class="combo off">Tiszavirág utca</div></div>
    </div>
  </aside>
</main>

<div class="bar">
  <div class="bg bg1"><span class="vgrip"></span><svg class="b16"><use href="#b-len"/></svg><span class="num">0.0000</span></div>
  <div class="bg bg2"><svg class="b16"><use href="#b-ang"/></svg><span class="num">0.0000°</span></div>
  <div class="bg bg3"><span class="vgrip"></span><svg class="b24"><use href="#b-levels"/></svg><span class="caret"></span><svg class="b24"><use href="#b-stack"/></svg><span class="caret"></span></div>
</div>

<footer class="status">
  <span class="st-left"></span>
  <span class="vgrip st-grip"></span>
  <span class="cell w26 prompt"></span>
  <span class="st-msg">Filled Placement : OFF</span>
  <div class="st-cells">
    <span class="cell w26"><svg class="s16"><use href="#s-fit"/></svg></span>
    <span class="cell w26"><svg class="s16"><use href="#s-lock"/></svg></span>
    <span class="cell w115">Gázhálózat Védőcső PVC</span>
    <span class="cell w102"></span>
    <span class="cell w26"></span>
    <span class="cell w26"></span>
    <span class="cell w26"></span>
    <span class="cell w26"><svg class="s16"><use href="#s-scroll"/></svg></span>
    <span class="cell w26"><svg class="s16"><use href="#s-home"/></svg></span>
    <span class="cell w26"></span>
    <span class="cell w26"><svg class="s16"><use href="#s-view"/></svg></span>
  </div>
</footer>
</body>
</html>
```

FILE: styles.css
```css
* { box-sizing: border-box; }
html, body { margin: 0; padding: 0; }
body {
  width: 1680px; height: 988px; overflow: hidden;
  display: flex; flex-direction: column;
  background: #efefef; color: #111;
  font-family: "Liberation Sans", Arial, sans-serif; font-size: 12px;
}
.defs { position: absolute; width: 0; height: 0; }

/* title bar */
.titlebar {
  height: 21px; flex: none; display: flex; align-items: flex-start;
  background: linear-gradient(180deg, #8db4da 0%, #a6d1f6 45%, #9cc6ea 80%, #7f9fbe 95%, #39495a 100%);
}
.tb-logo { width: 16px; height: 16px; margin: 2px 0 0 1px; flex: none; }
.tb-title { font-family: "Open Sans", sans-serif; font-size: 11.500px; line-height: 21px; margin-left: 4px; color: #111; white-space: nowrap; letter-spacing: -.08px; }
.tb-smudge { width: 100px; height: 5px; margin: 13px 140px 0 auto; background: rgba(50,70,90,.3); filter: blur(3px); }
.tb-buttons { display: flex; margin-right: 3px; gap: 5px; }
.wgroup { display: flex; border: 1px solid #3d5670; border-top: 0; border-radius: 0 0 4px 4px; overflow: hidden; height: 18px; }
.wbtn { display: flex; align-items: center; justify-content: center; height: 17px; background: linear-gradient(180deg,#b8d2e8,#7f9cba 50%,#a4bdd4); }
.exit { width: 27px; height: 18px; border: 1px solid #3d5670; border-top: 0; border-radius: 0 0 4px 4px; }
.min { width: 29px; border-right: 1px solid #4d6680; }
.res { width: 26px; }
.close { width: 47px; background: linear-gradient(180deg,#e8a090,#c04030 50%,#d88070); }
.w14 { width: 14px; height: 14px; }

/* menu */
.menubar { height: 24px; flex: none; display: flex; align-items: center; background: #efefef; padding: 3px 0 0 3px; }
.grip { width: 2px; height: 9px; margin-right: 11px; background: repeating-linear-gradient(180deg,#888 0 2px,transparent 2px 4px); }
.mi { margin-right: 13.500px; font-family: "Roboto", sans-serif; font-size: 11.500px; color: #111; letter-spacing: -.55px; }

/* main */
.workspace { height: 883px; flex: none; display: flex; }
.strip { width: 5px; background: #adadda; flex: none; }
.left { width: 347px; flex: none; display: flex; flex-direction: column; background: #efefef; }
.right { width: 398px; flex: none; display: flex; flex-direction: column; background: #efefef; border-bottom: 1px solid #aaa; }
.dock-head { height: 20px; flex: none; display: flex; align-items: center; background: linear-gradient(180deg,#a9c1db,#ebf1f7); padding-left: 3px; }
.dock-title { font-family: "Open Sans", sans-serif; font-size: 11.500px; letter-spacing: -.1px; color: #5f7488; flex: 1; }
.h-ic { flex: none; }
.h-m { width: 10px; height: 10px; margin-right: 7px; }
.h-p { width: 10px; height: 12px; margin-right: 6px; }
.h-c { width: 12px; height: 12px; margin-right: 4px; }

.dash { height: 53px; flex: none; margin: 1px 4px 1px 2px; background: #fff; border: 1px solid #aaa; display: flex; align-items: center; padding-left: 14px; gap: 21.500px; }
.d-ic { width: 26px; height: 26px; flex: none; }

.left-body { flex: 1; display: flex; gap: 3px; padding: 0 3px 3px 2px; min-height: 0; }
.tools { width: 36px; flex: none; background: #dcdcdc; border: 1px solid #b5b5b5; padding: 3px 0 0 1px; display: flex; flex-direction: column; gap: 2px; }
.tg { width: 33px; border: 1px solid #aaa; outline: 1px solid #f0f0f0; outline-offset: -2px; display: flex; flex-direction: column; align-items: center; background: #dcdcdc; flex: none; }
.g1 { height: 31px; }
.g2 { height: 62px; }
.g3 { height: 253px; padding-top: 2px; }
.g4 { height: 72px; padding-top: 12px; }
.g5 { height: 57px; padding-top: 2px; }
.tbtn { width: 28px; display: flex; align-items: center; justify-content: center; flex: none; position: relative; }
.b30 { height: 30px; }
.b29 { height: 29px; }
.b28 { height: 28px; }
.b26 { height: 26px; }
.t24 { width: 24px; height: 24px; }
.sel { background: #a6ceff; border: 1px solid #3d94f5; }
.abc { font-size: 8.500px; font-weight: bold; color: #808080; letter-spacing: -.1px; padding: 0 0 5px 3px; }
.abc-box { position: absolute; left: 7px; bottom: 7px; width: 4px; height: 4px; border: 1px solid #808080; }

.panel { width: 303px; flex: none; background: #f5f5f3; border: 1px solid #c8c8c8; border-radius: 4px 4px 0 0; padding: 6px 6px 7px 6px; display: flex; flex-direction: column; }
.box { background: #fff; border: 1px solid #aaa; display: flex; align-items: center; justify-content: center; }
.head-box { height: 30px; flex: none; position: relative; }
.head-text { font-family: "DejaVu Sans", sans-serif; font-size: 10px; font-weight: bold; color: #111; padding-right: 24px; }
.head-x { width: 18px; height: 18px; position: absolute; right: 5px; top: 5px; }
.chips { display: flex; gap: 3px; margin-top: 6px; height: 26px; flex: none; }
.chip { font-family: "DejaVu Sans", sans-serif; font-size: 10px; font-weight: bold; color: #3d4a5c; }
.c1 { width: 147px; }
.c2 { width: 77px; padding-right: 28px; }
.c3 { width: 59px; }
.mini { height: 25px; flex: none; margin-top: 7px; display: flex; align-items: center; background: linear-gradient(180deg,#fafafa,#e8e8e8); padding-left: 5px; gap: 6px; }
.m18 { width: 18px; height: 18px; flex: none; }
.mini-sep { width: 1px; height: 18px; background: #ccc; }

.tree { flex: 1; background: #fff; border: 1px solid #aaa; padding-top: 4px; position: relative; min-height: 0; }
.guide { position: absolute; width: 0; border-left: 1px dotted #777; }
.ga { left: 13px; top: 32px; height: 236px; }
.gb { left: 32px; top: 48px; height: 204px; }
.gc { left: 51px; top: 128px; height: 28px; }
.row { height: 16px; display: flex; align-items: center; font-family: "DejaVu Sans", sans-serif; font-size: 11px; letter-spacing: .3px; color: #111; position: relative; }
.l0 { padding-left: 4px; }
.l1 { padding-left: 23px; }
.l2 { padding-left: 42px; }
.slot { width: 22px; height: 16px; flex: none; display: flex; align-items: center; padding-left: 5px; position: relative; }
.slot::after { content: ""; position: absolute; left: 14px; right: 1px; top: 8px; border-top: 1px dotted #777; }
.slot.leaf::after { left: 10px; }
.ex { width: 9px; height: 9px; position: relative; z-index: 1; }
.cb { width: 13px; height: 13px; flex: none; }
.ti { width: 15px; height: 15px; flex: none; margin: 0 5px 0 2px; }
.tx { white-space: nowrap; color: #1a1a2a; }
.active { font-weight: bold; color: #111; background: #eee; margin-left: -2px; padding: 0 2px; line-height: 16px; letter-spacing: .1px; }

/* view */
.view { width: 925px; flex: none; display: flex; flex-direction: column; background: #efefef; }
.view-title { height: 30px; flex: none; display: flex; align-items: center; background: linear-gradient(180deg,#8eabcd,#b5cde7); border-top: 1px solid #30383f; padding-top: 5px; }
.view-icon { width: 16px; height: 16px; margin-left: 3px; background: #e6edf5; border: 1px solid #c8d4e0; display: flex; align-items: center; justify-content: center; border-radius: 2px; }
.view-icon span { width: 8px; height: 8px; background: #444; }
.view-name { font-family: "Open Sans", sans-serif; font-size: 11.500px; letter-spacing: -.25px; color: #111; margin-left: 7px; flex: 1; }
.view-btns { display: flex; gap: 3px; margin-right: 2px; }
.vb { width: 30px; height: 17px; display: flex; align-items: center; justify-content: center; border: 1px solid #5d7a98; border-radius: 2px; background: linear-gradient(180deg,#cfe0f0,#9db9d6); }
.vb.red { background: linear-gradient(180deg,#e89080,#b83426); border-color: #7a3028; }
.view-tools { height: 24px; flex: none; display: flex; align-items: center; background: #f0f0f0; padding-left: 1px; }
.v18 { width: 18px; height: 18px; flex: none; margin: 0 2px; }
.caret { width: 0; height: 0; border: 4px solid transparent; border-top: 5px solid #111; border-bottom: 0; margin: 0 5px 0 2px; flex: none; }
.vsep { width: 1px; height: 20px; background: #bbb; margin: 0 1.500px 0 3px; flex: none; }

.view-mid { flex: 1; display: flex; min-height: 0; }
.canvas { width: 908px; flex: none; background: #fff; position: relative; overflow: hidden; }
.drawing { width: 908px; height: 813px; display: block; }
.ln-grey path { fill: none; stroke: #a8a8a8; stroke-width: 1; }
.ln-pink path { fill: none; stroke: #ffa8a8; stroke-width: 1; }
.ln-teal { fill: none; stroke: #c4e0dc; stroke-width: 1; }
.ln-rose { fill: none; stroke: #efc0d0; stroke-width: 1; }
.ln-lime path { fill: none; stroke: #bcdca0; stroke-width: 1; }
.dash-l { stroke-dasharray: 12 4; }
.ln-green path { fill: none; stroke: #2f9a2f; stroke-width: 1; }
.ln-green .dash-m { stroke-dasharray: 11 5; }
.ln-green .dash-s { stroke-dasharray: 14 2; }
.ln-blue { fill: none; stroke: #0000f0; stroke-width: 3; }
.ln-purple { fill: none; stroke: #8a00cc; stroke-width: 2.600; stroke-linejoin: round; }
.tick { fill: none; stroke: #555; stroke-width: 1; }
.cad { font-family: "Roboto", "Liberation Sans", sans-serif; font-weight: 100; font-style: italic; font-size: 30px; word-spacing: 10px; }
.cad-red { fill: #ff8a8a; }
.cad-teal { fill: #b4d8d4; }
.cad-rose { fill: #eeb4c8; }
.cad-lime { fill: #b4d890; font-size: 21px; }
.dim { font-family: "Liberation Sans", sans-serif; font-size: 32px; fill: #0c8a0c; text-anchor: middle; dominant-baseline: central; }
.sel-rect { fill: none; stroke: #a8d2f8; stroke-width: 2; }
.sel-glow { fill: none; stroke: #a6eea6; stroke-width: 4.500; }
.sel-core { fill: none; stroke: #7f907f; stroke-width: 1.400; }
.sel-circ { fill: #eee; stroke: #333; stroke-width: 1; }
.sel-cross { fill: none; stroke: #111; stroke-width: 1; }
.x-out { fill: none; stroke: #5a5200; stroke-width: 6; }
.x-in { fill: none; stroke: #e6cc18; stroke-width: 3.600; }
.cur-out { fill: none; stroke: #111; stroke-width: 3; }
.cur-in { fill: none; stroke: #fff; stroke-width: 1.400; }
.cur-dot { fill: #18d0e0; stroke: #0a7a88; stroke-width: .5; }

.tooltip { position: absolute; left: 394px; top: 519px; width: 189px; height: 19px; border: 1px solid #777; border-radius: 2px; background: linear-gradient(180deg,#fff,#e4e5f0); box-shadow: 3px 3px 3px rgba(0,0,0,.35); font-family: "Open Sans", sans-serif; font-size: 11.300px; line-height: 17px; color: #4c4c4c; padding-left: 5px; white-space: nowrap; }

.vscroll { width: 17px; flex: none; display: flex; flex-direction: column; align-items: center; background: #efefef; padding: 5px 0 8px; }
.vthumb { width: 13px; height: 43px; margin-top: 374px; border: 1px solid #888; border-radius: 2px; background: linear-gradient(90deg,#f4f4f4,#c4c4c8); display: flex; align-items: center; justify-content: center; }
.vthumb span { width: 7px; height: 8px; background: repeating-linear-gradient(180deg,#555 0 1px,transparent 1px 3px); }
.arr { width: 0; height: 0; border: 4px solid transparent; flex: none; }
.arr.up { border-top: 0; border-bottom: 5px solid #333; }
.arr.down { border-bottom: 0; border-top: 5px solid #333; margin-top: auto; }
.arr.lf { border-left: 0; border-right: 5px solid #333; }
.arr.rt { border-right: 0; border-left: 5px solid #333; margin-left: auto; margin-right: 8px; }
.hscroll { height: 16px; flex: none; width: 908px; display: flex; align-items: flex-start; padding: 2px 0 0 3px; background: #efefef; }
.hscroll .arr { margin-top: 1px; }
.hthumb { width: 44px; height: 11px; margin-left: 422px; border: 1px solid #888; border-radius: 2px; background: linear-gradient(180deg,#f4f4f4,#c4c4c8); }

/* right panel */
.gh { height: 24px; flex: none; margin-left: 1px; display: flex; align-items: center; padding: 1px 0 0 13px; background: linear-gradient(180deg,#eceef1,#e0e2e6); border-top: 1px solid #d4d4d4; font-family: "DejaVu Sans", sans-serif; font-size: 10px; font-weight: bold; color: #747474; }
.gh.gap { margin-top: 2px; }
.gh-ic { width: 14px; height: 14px; margin-right: 4px; flex: none; }
.listbox { height: 167px; flex: none; margin-left: 2px; background: #e9ebef; border: 1px solid #555; padding-top: 2px; font-family: "DejaVu Sans", sans-serif; font-size: 10.500px; color: #333; }
.radio-row { height: 19px; display: flex; align-items: center; padding-left: 7px; }
.radio { width: 12px; height: 12px; border-radius: 50%; border: 1px solid #8a8a8a; background: #e0e0e0; margin-right: 5px; box-shadow: inset 0 0 0 1px #f4f4f4; }
.radio.on { background: radial-gradient(circle,#0a5a9a 0 2.500px,#d8e8f4 3px); border-color: #555; }
.prop { height: 27px; flex: none; margin-left: 2px; display: flex; border-bottom: 1px solid #d8d8d8; }
.pk { width: 198px; background: #f6f7fa; border-right: 1px solid #d8d8d8; padding-left: 19px; line-height: 27px; letter-spacing: -.2px; color: #222; }
.pv { flex: 1; background: #fff; padding-left: 3px; line-height: 27px; font-size: 11.500px; letter-spacing: -.2px; color: #222; }
.form { height: 243px; flex: none; margin-left: 1px; background: #e9ebef; border-bottom: 1px solid #bbb; border-radius: 0 0 0 3px; padding: 6px 3px 6px 7px; display: flex; flex-direction: column; gap: 10px; font-family: "DejaVu Sans", sans-serif; font-size: 11px; }
.frow { height: 20px; flex: none; display: flex; align-items: center; }
.frow label { width: 99px; color: #222; flex: none; letter-spacing: .2px; padding-bottom: 1px; }
.combo { flex: 1; height: 20px; background: #fff; border: 1px solid #d0d0d0; padding-left: 3px; line-height: 18px; position: relative; color: #111; }
.combo::after { content: ""; position: absolute; right: 4px; top: 7px; border: 4px solid transparent; border-top: 5px solid #222; border-bottom: 0; }
.combo.off { background: #e9ebef; border: 1px solid #aeaeae; color: #a9a9a9; }
.combo.off::after { border-top-color: #bbb; }

/* bottom toolbar */
.bar { height: 35px; flex: none; display: flex; border-bottom: 1px solid #aaa; background: #efefef; }
.bg { display: flex; align-items: center; background: linear-gradient(180deg,#fbfbfb,#dcdcdc); height: 34px; }
.bg1 { width: 182px; border-right: 1px solid #b0b0b0; border-radius: 4px 0 0 0; padding-left: 3px; }
.bg2 { width: 181px; border-radius: 0 4px 0 0; padding-left: 7px; }
.bg3 { width: 96px; margin-left: 2px; border-radius: 4px 4px 4px 0; padding-left: 3px; }
.vgrip { width: 3px; height: 18px; flex: none; background: repeating-linear-gradient(180deg,#888 0 2px,transparent 2px 4px); }
.b16 { width: 16px; height: 16px; flex: none; margin: 0 4px 0 11px; }
.bg2 .b16 { margin: 0 5px 0 0; }
.b24 { width: 24px; height: 24px; flex: none; margin-left: 4px; }
.bg3 .caret { margin: 0 0 0 6px; }
.bg3 .b24 + .caret + .b24 { margin-left: 4px; }
.num { width: 137px; height: 17px; background: #fff; border: 1px solid #aaa; font-size: 11.500px; line-height: 15px; color: #7c8a98; padding-left: 4px; flex: none; }

/* status */
.status { height: 25px; flex: none; display: flex; align-items: center; background: #efefef; }
.st-left { width: 329px; flex: none; }
.st-grip { margin-right: 3px; }
.cell { height: 23px; display: flex; align-items: center; justify-content: center; flex: none; border-left: 1px solid #aaa; border-top: 1px solid #aaa; border-right: 1px solid #fff; border-bottom: 1px solid #fff; overflow: hidden; white-space: nowrap; font-family: "DejaVu Sans", sans-serif; font-size: 10.500px; color: #111; }
.w26 { width: 26px; }
.w102 { width: 102px; }
.w115 { width: 115px; justify-content: flex-start; padding-left: 1px; letter-spacing: -.25px; }
.prompt { position: relative; border-left-color: #d0d0d0; border-top-color: #d0d0d0; }
.prompt::after { content: ""; position: absolute; right: 1px; top: 2px; border: 3px solid transparent; border-bottom: 4px solid #111; border-top: 0; }
.st-msg { width: 844px; flex: none; padding-left: 2px; font-size: 11.500px; letter-spacing: -.1px; color: #111; border-right: 1px solid #aaa; line-height: 26px; height: 25px; }
.st-cells { display: flex; gap: 2px; margin-left: 2px; }
.s16 { width: 16px; height: 16px; }
```
